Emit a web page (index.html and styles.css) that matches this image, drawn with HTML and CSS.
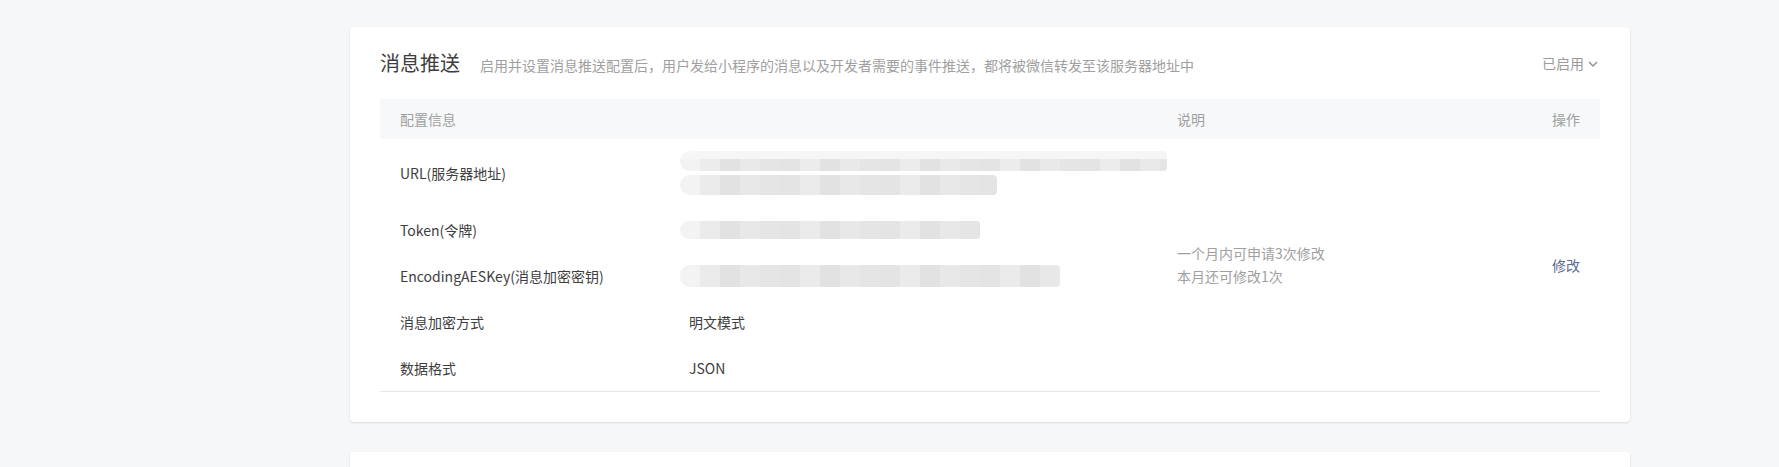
FILE: index.html
```html
<!DOCTYPE html>
<html lang="zh-CN">

<head>
    <meta charset="utf-8">
    <title>消息推送</title>
    <link rel="stylesheet" href="styles.css">
</head>

<body>
    <div class="page">
        <div class="card">
            <div class="card-head">
                <h2 class="title">消息推送</h2>
                <p class="desc">启用并设置消息推送配置后，用户发给小程序的消息以及开发者需要的事件推送，都将被微信转发至该服务器地址中</p>
                <div class="status">
                    已启用
                    <svg width="10" height="6" viewBox="0 0 10 6">
                        <path d="M1 1 L5 5 L9 1" fill="none" stroke="#8c8c8c" stroke-width="1.4" />
                    </svg>
                </div>
            </div>
            <table class="config">
                <colgroup>
                    <col class="col-label">
                    <col class="col-value">
                    <col class="col-note">
                    <col class="col-op">
                </colgroup>
                <thead>
                    <tr>
                        <th>配置信息</th>
                        <th></th>
                        <th>说明</th>
                        <th class="op">操作</th>
                    </tr>
                </thead>
                <tbody>
                    <tr class="row-url">
                        <td>URL(服务器地址)</td>
                        <td>
                            <div class="blur blur-a"></div>
                            <div class="blur blur-b"></div>
                        </td>
                        <td class="note" rowspan="5">一个月内可申请3次修改<br>本月还可修改1次</td>
                        <td class="op" rowspan="5"><a href="#">修改</a></td>
                    </tr>
                    <tr>
                        <td>Token(令牌)</td>
                        <td><div class="blur blur-c"></div></td>
                    </tr>
                    <tr>
                        <td>EncodingAESKey(消息加密密钥)</td>
                        <td><div class="blur blur-d"></div></td>
                    </tr>
                    <tr>
                        <td>消息加密方式</td>
                        <td>明文模式</td>
                    </tr>
                    <tr>
                        <td>数据格式</td>
                        <td>JSON</td>
                    </tr>
                </tbody>
            </table>
        </div>
        <div class="card card-next"></div>
    </div>
</body>

</html>
```

FILE: styles.css
```css
body {
    margin: 0;
    background: #f6f7f9;
    font-family: "Noto Sans CJK SC", "Noto Sans", sans-serif;
    color: #3e3e3e;
    overflow: hidden;
}

.page {
    display: flex;
    flex-direction: column;
    gap: 30px;
    padding: 27px 0 0 350px;
}

.card {
    width: 1220px;
    padding: 20px 30px 30px;
    background: #fff;
    border-radius: 4px;
    box-shadow: 0 1px 2px rgba(150, 150, 150, .3);
}

.card-next {
    height: 200px;
}

.card-head {
    display: flex;
    align-items: baseline;
    height: 32px;
    margin-bottom: 20px;
    line-height: 32px;
}

.title {
    margin: 0;
    font-size: 20px;
    font-weight: normal;
}

.desc {
    margin: 0 0 0 20px;
    font-size: 14px;
    color: #a0a0a0;
    flex: 1;
}

.status {
    align-self: center;
    display: flex;
    align-items: center;
    gap: 4px;
    margin-right: 2px;
    font-size: 14px;
    color: #9a9a9a;

    & svg {
        margin-top: 2px;
    }
}

.config {
    width: 100%;
    table-layout: fixed;
    border-collapse: collapse;
    font-size: 14px;
    border-bottom: 1px solid #e7e7eb;

    & th {
        height: 40px;
        padding: 0 20px;
        background: #f6f8f9;
        color: #a0a0a0;
        font-weight: normal;
        text-align: left;
    }

    & td {
        padding: 12px 20px;
        line-height: 22px;
        vertical-align: middle;
    }

    & .op {
        text-align: right;
    }

    & a {
        color: #576b95;
        text-decoration: none;
    }
}

.col-label {
    width: 289px;
}

.col-value {
    width: 488px;
}

.col-op {
    width: 68px;
}

.note {
    color: #a0a0a0;
    line-height: 23px !important;
}

.blur {
    height: 20px;
    margin-left: -9px;
    border-radius: 10px 4px 4px 10px;
    filter: blur(.5px);
    background:
        linear-gradient(90deg, #f3f3f3 0 20px, transparent 20px),
        repeating-linear-gradient(90deg, #e4e4e4 0 20px, #ebebeb 20px 40px, #e2e2e2 40px 60px, #e8e8e8 60px 80px, #e5e5e5 80px 100px);
}

.blur-a {
    width: 487px;
    margin-bottom: 4px;
    background:
        linear-gradient(180deg, #f6f6f6 0 8px, transparent 8px),
        linear-gradient(90deg, #f3f3f3 0 20px, transparent 20px),
        repeating-linear-gradient(90deg, #e4e4e4 0 20px, #ececec 20px 40px, #e2e2e2 40px 60px, #e9e9e9 60px 80px, #e5e5e5 80px 100px);
}

.blur-b {
    width: 317px;
}

.blur-c {
    width: 300px;
    height: 18px;
}

.blur-d {
    width: 380px;
    height: 22px;
}
```
